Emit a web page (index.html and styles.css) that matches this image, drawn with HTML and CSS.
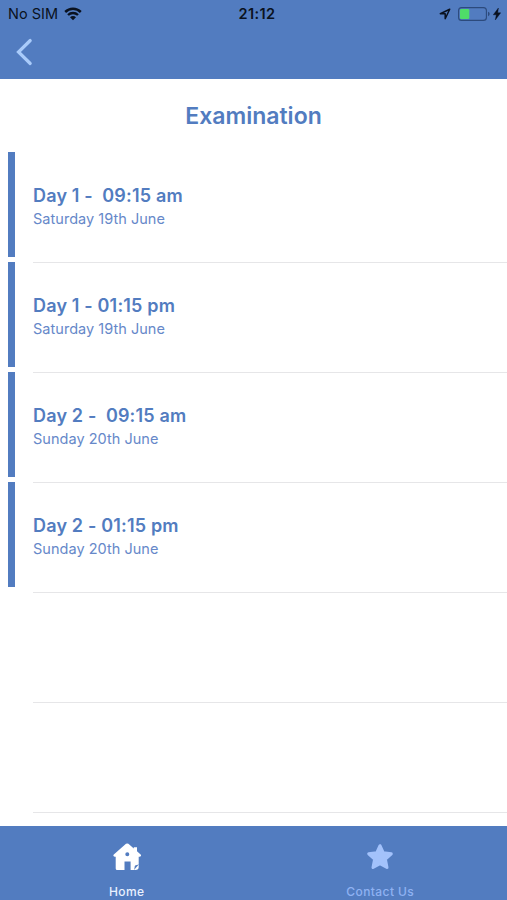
FILE: index.html
```html
<!DOCTYPE html>
<html lang="en">
<head>
    <meta charset="UTF-8">
    <meta name="viewport" content="width=device-width, initial-scale=1.0">
    <title>Examination</title>
    <link rel="stylesheet" href="styles.css">
</head>
<body>
    <div class="app">
        <header class="header">
            <div class="status-bar">
                <div class="status-left">
                    <span class="carrier">No SIM</span>
                    <svg class="wifi" width="18" height="14" viewBox="0 0 18 14" fill="none" stroke="#0a1220">
                        <path d="M1.2 5a11.2 11.2 0 0 1 15.6 0" stroke-width="2.5"/>
                        <path d="M4 8a7.2 7.2 0 0 1 10 0" stroke-width="2.3"/>
                        <path d="M6 10.2a4.2 4.2 0 0 1 6 0L9 13.2z" fill="#0a1220" stroke="none"/>
                    </svg>
                </div>
                <span class="time">21:12</span>
                <div class="status-right">
                    <svg width="12" height="12" viewBox="0 0 12 12" fill="none" stroke="#0a1220" stroke-width="1.5" stroke-linejoin="round">
                        <path d="M10.7 1.3L1.3 5.8h4.9v4.9z"/>
                    </svg>
                    <svg class="battery" width="32" height="14" viewBox="0 0 32 14">
                        <rect x="0.6" y="0.6" width="27.8" height="12.8" rx="3" fill="none" stroke="#2c4a7c" stroke-width="1.1"/>
                        <rect x="2" y="2" width="9.3" height="10" rx="1.3" fill="#4fdc68"/>
                        <path d="M30 4.8q1.7 .6 1.7 2.2T30 9.2z" fill="#2c4a7c"/>
                    </svg>
                    <svg class="bolt" width="8" height="12" viewBox="0 0 8 12">
                        <path d="M5.4 0L0.3 6.8h3L2.3 12 7.7 4.8h-3z" fill="#0a1220" stroke="#0a1220" stroke-width="0.4"/>
                    </svg>
                </div>
            </div>
            <button class="back" aria-label="Back">
                <svg width="18" height="28" viewBox="0 0 18 28" fill="none" stroke="#a9cbfa" stroke-width="3.2" stroke-linecap="round">
                    <path d="M15.2 2.5L3.5 14l11.7 11.5"/>
                </svg>
            </button>
        </header>

        <main class="content">
            <h1 class="title">Examination</h1>
            <ul class="list">
                <li class="item">
                    <span class="bar"></span>
                    <div class="info">
                        <h2>Day 1 -&nbsp; 09:15 am</h2>
                        <p>Saturday 19th June</p>
                    </div>
                </li>
                <li class="item">
                    <span class="bar"></span>
                    <div class="info">
                        <h2>Day 1 - 01:15 pm</h2>
                        <p>Saturday 19th June</p>
                    </div>
                </li>
                <li class="item">
                    <span class="bar"></span>
                    <div class="info">
                        <h2>Day 2 -&nbsp; 09:15 am</h2>
                        <p>Sunday 20th June</p>
                    </div>
                </li>
                <li class="item">
                    <span class="bar"></span>
                    <div class="info">
                        <h2>Day 2 - 01:15 pm</h2>
                        <p>Sunday 20th June</p>
                    </div>
                </li>
                <li class="item empty"><div class="info"></div></li>
                <li class="item empty"><div class="info"></div></li>
            </ul>
        </main>

        <nav class="tabs">
            <a class="tab active" href="#">
                <svg width="28" height="28" viewBox="0 0 28 28">
                    <path fill="#fff" fill-rule="evenodd" d="M13 .8Q14.200 0 15.400 .8L20.800 5.400V4.200H24V8.200l3.600 3.200q.7 .8 .3 1.500t-1.400 .8H25.700v7.800l-3 .8q-.9.300-1 1.200L21.200 27H17.600v-8.500h-6.100V27H4.200Q2.700 27 2.700 25.500V13.700H1.900q-1 0-1.400-.8t.3-1.500zM14.300 9.200a2 2 0 1 0 0 4 2 2 0 0 0 0-4z"/>
                    <path fill="#fff" d="M25.700 21.500v2.300q0 3.200-3.200 3.200H21z"/>
                </svg>
                <span>Home</span>
            </a>
            <a class="tab" href="#">
                <svg width="28" height="28" viewBox="0 0 28 28">
                    <path fill="#a3c2fb" stroke="#a3c2fb" stroke-width="3" stroke-linejoin="round" d="M14 2.7l3.3 7.1 8 1-5.9 5.4 1.6 8.3-7-3.900-7 3.900 1.600-8.300-5.900-5.400 8-1z"/>
                </svg>
                <span>Contact Us</span>
            </a>
        </nav>
    </div>
</body>
</html>
```
FILE: styles.css
```css
* {
    box-sizing: border-box;
    margin: 0;
    padding: 0;
}
body {
    font-family: Inter, 'Liberation Sans', Arial, sans-serif;
    color: #527cc0;
    background-color: #fff;
}
svg {
    display: block;
}
.app {
    display: flex;
    flex-direction: column;
    height: 900px;
    overflow: hidden;
}
.header {
    height: 79px;
    flex-shrink: 0;
    background-color: #527cc0;
}
.status-bar {
    display: grid;
    grid-template-columns: 1fr auto 1fr;
    align-items: center;
    height: 27px;
    padding: 0 6px 0 8px;
    font-size: 14.5px;
    color: #0a1220;
}
.status-left,
.status-right {
    display: flex;
    align-items: center;
}
.status-left {
    gap: 6px;
}
.status-right {
    justify-content: flex-end;
}
.time {
    padding-left: 5px;
    font-weight: 600;
    letter-spacing: 0.4px;
}
.battery {
    margin-left: 7px;
}
.bolt {
    margin-left: 3px;
}
.back {
    display: block;
    margin: 11px 0 0 15px;
    border: none;
    background: none;
    cursor: pointer;
}
.content {
    flex: 1;
    min-height: 0;
    overflow: hidden;
}
.title {
    height: 73px;
    line-height: 74px;
    font-size: 23px;
    font-weight: 600;
    text-align: center;
}
.list {
    list-style: none;
}
.item {
    display: flex;
    height: 110px;
    padding-left: 8px;
}
.bar {
    width: 6.5px;
    height: 105px;
    margin-right: 18.5px;
    background-color: #527cc0;
}
.info {
    flex: 1;
    height: 111px;
    padding-top: 32px;
    border-bottom: 1px solid #e6e6e8;
}
.info h2 {
    line-height: 24px;
    font-size: 18px;
    font-weight: 600;
    letter-spacing: 0.17px;
}
.info p {
    line-height: 22px;
    font-size: 14.5px;
    letter-spacing: 0.03px;
    color: #6688c9;
}
.empty .info {
    margin-left: 25px;
}
.tabs {
    display: flex;
    height: 74px;
    flex-shrink: 0;
    background-color: #527cc0;
}
.tab {
    display: flex;
    flex: 1;
    flex-direction: column;
    align-items: center;
    gap: 13px;
    padding-top: 17px;
    font-size: 12px;
    font-weight: 500;
    line-height: 16px;
    letter-spacing: 0.4px;
    text-decoration: none;
    color: #8fb2f2;
}
.tab.active {
    color: #e9f1ff;
}
```
